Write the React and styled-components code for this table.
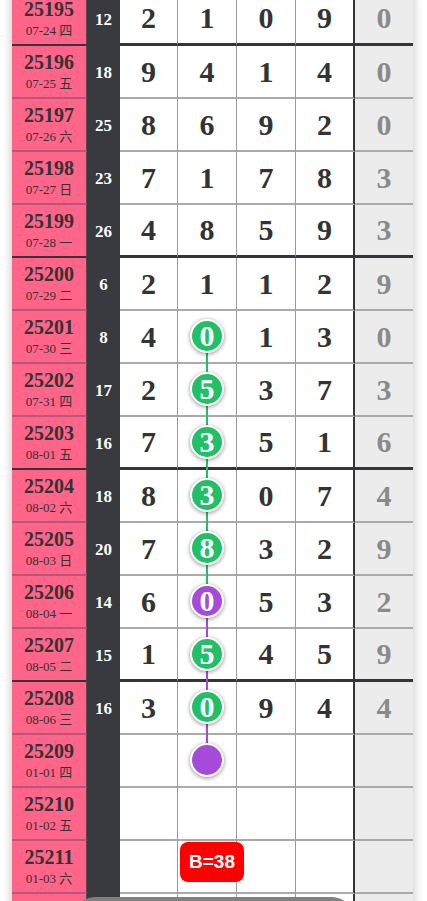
import styled, { createGlobalStyle } from "styled-components";

const GlobalStyle = createGlobalStyle`
  html, body {
    margin: 0;
    padding: 0;
    background: #ffffff;
    overflow: hidden;
  }
`;

const GREEN = "#22c066";
const PURPLE = "#a64bd9";

// each row: issue, date, sum, digits, last, dark bottom line, ball {color, down}
const rows = [
  { id: "25195", date: "07-24 四", sum: "12", nums: [2, 1, 0, 9], tail: 0, dark: true },
  { id: "25196", date: "07-25 五", sum: "18", nums: [9, 4, 1, 4], tail: 0 },
  { id: "25197", date: "07-26 六", sum: "25", nums: [8, 6, 9, 2], tail: 0 },
  { id: "25198", date: "07-27 日", sum: "23", nums: [7, 1, 7, 8], tail: 3 },
  { id: "25199", date: "07-28 一", sum: "26", nums: [4, 8, 5, 9], tail: 3, dark: true },
  { id: "25200", date: "07-29 二", sum: "6", nums: [2, 1, 1, 2], tail: 9 },
  { id: "25201", date: "07-30 三", sum: "8", nums: [4, 0, 1, 3], tail: 0, ball: { color: GREEN, down: GREEN } },
  { id: "25202", date: "07-31 四", sum: "17", nums: [2, 5, 3, 7], tail: 3, ball: { color: GREEN, down: GREEN } },
  { id: "25203", date: "08-01 五", sum: "16", nums: [7, 3, 5, 1], tail: 6, dark: true, ball: { color: GREEN, down: GREEN } },
  { id: "25204", date: "08-02 六", sum: "18", nums: [8, 3, 0, 7], tail: 4, ball: { color: GREEN, down: GREEN } },
  { id: "25205", date: "08-03 日", sum: "20", nums: [7, 8, 3, 2], tail: 9, ball: { color: GREEN, down: GREEN } },
  { id: "25206", date: "08-04 一", sum: "14", nums: [6, 0, 5, 3], tail: 2, ball: { color: PURPLE, down: PURPLE } },
  { id: "25207", date: "08-05 二", sum: "15", nums: [1, 5, 4, 5], tail: 9, dark: true, ball: { color: GREEN, down: PURPLE } },
  { id: "25208", date: "08-06 三", sum: "16", nums: [3, 0, 9, 4], tail: 4, ball: { color: GREEN, down: PURPLE } },
  { id: "25209", date: "01-01 四", sum: "", nums: [], tail: "", ball: { color: PURPLE, empty: true } },
  { id: "25210", date: "01-02 五", sum: "", nums: [], tail: "" },
  { id: "25211", date: "01-03 六", sum: "", nums: [], tail: "", badge: "B=38" },
  { id: "25212", date: "01-04 日", sum: "", nums: [], tail: "" },
];

const Page = styled.div`
  width: 401px;
  margin: -7px 0 0 12px;
  box-shadow: 0 0 10px rgba(0, 0, 0, 0.25);
  background: #fff;
`;

const Row = styled.div`
  display: grid;
  grid-template-columns: 75px 33px 58px 59px 59px 59px 1fr;
  height: 53px;
`;

const IssueCell = styled.div`
  background: #ff6489;
  border-bottom: 2px solid ${(p) => (p.$dark ? "#34343a" : "#b8577a")};
  border-right: 1px solid #5a4a50;
  display: flex;
  flex-direction: column;
  align-items: center;
  justify-content: center;
  color: #333;
  font-family: "Liberation Serif", "Noto Sans CJK SC", serif;
`;

const IssueNo = styled.div`
  font-size: 20px;
  font-weight: bold;
  line-height: 22px;
`;

const IssueDate = styled.div`
  font-size: 13px;
  line-height: 16px;
  margin-top: 3px;
`;

const SumCell = styled.div`
  background: #393940;
  color: #fff;
  display: flex;
  align-items: center;
  justify-content: center;
  font-family: "Liberation Serif", serif;
  font-weight: bold;
  font-size: 17px;
`;

const NumCell = styled.div`
  position: relative;
  display: flex;
  align-items: center;
  justify-content: center;
  background: ${(p) => (p.$tail ? "#ececec" : "#fff")};
  border-bottom: ${(p) => (p.$dark ? "3px solid #34343a" : "2px solid #aaaaaa")};
  border-right: ${(p) => (p.$edge ? "2px solid #34343a" : p.$tail ? "none" : "1px solid #999")};
  color: ${(p) => (p.$tail ? "#8a8a8a" : "#333")};
  font-family: "Liberation Serif", serif;
  font-weight: bold;
  font-size: 30px;
`;

const Ball = styled.div`
  position: relative;
  z-index: 2;
  width: 30px;
  height: 30px;
  border-radius: 50%;
  border: 2px solid #fff;
  background: ${(p) => p.$color};
  box-shadow: 0 1px 4px rgba(0, 0, 0, 0.45);
  color: #fff;
  display: flex;
  align-items: center;
  justify-content: center;
  font-family: "Liberation Serif", serif;
  font-weight: bold;
  font-size: 30px;
  margin-top: -1px;
`;

const Link = styled.div`
  position: absolute;
  z-index: 1;
  left: 50%;
  top: 26px;
  width: 2px;
  margin-left: -1px;
  height: 53px;
  background: ${(p) => p.$color};
`;

const Badge = styled.div`
  position: absolute;
  z-index: 3;
  left: 2px;
  top: 1px;
  width: 64px;
  height: 40px;
  border-radius: 8px;
  background: #ff0000;
  color: #fff;
  display: flex;
  align-items: center;
  justify-content: center;
  font-family: "Liberation Sans", Arial, sans-serif;
  font-weight: bold;
  font-size: 19px;
`;

const BottomBar = styled.div`
  position: fixed;
  left: 75px;
  bottom: -36px;
  width: 277px;
  height: 40px;
  border-radius: 20px;
  background: #808080;
  z-index: 5;
`;

function DigitCell({ row, col }) {
  const isBall = row.ball && col === 1;
  const value = row.nums[col];
  return (
    <NumCell $dark={row.dark} $edge={col === 3}>
      {isBall ? (
        <>
          <Ball $color={row.ball.color}>{row.ball.empty ? "" : value}</Ball>
          {row.ball.down && <Link $color={row.ball.down} />}
        </>
      ) : (
        value
      )}
      {row.badge && col === 1 && <Badge>{row.badge}</Badge>}
    </NumCell>
  );
}

export default function App() {
  return (
    <>
      <GlobalStyle />
      <Page>
        {rows.map((row) => (
          <Row key={row.id}>
            <IssueCell $dark={row.dark}>
              <IssueNo>{row.id}</IssueNo>
              <IssueDate>{row.date}</IssueDate>
            </IssueCell>
            <SumCell>{row.sum}</SumCell>
            {[0, 1, 2, 3].map((c) => (
              <DigitCell key={c} row={row} col={c} />
            ))}
            <NumCell $tail $dark={row.dark}>
              {row.tail}
            </NumCell>
          </Row>
        ))}
      </Page>
      <BottomBar />
    </>
  );
}
